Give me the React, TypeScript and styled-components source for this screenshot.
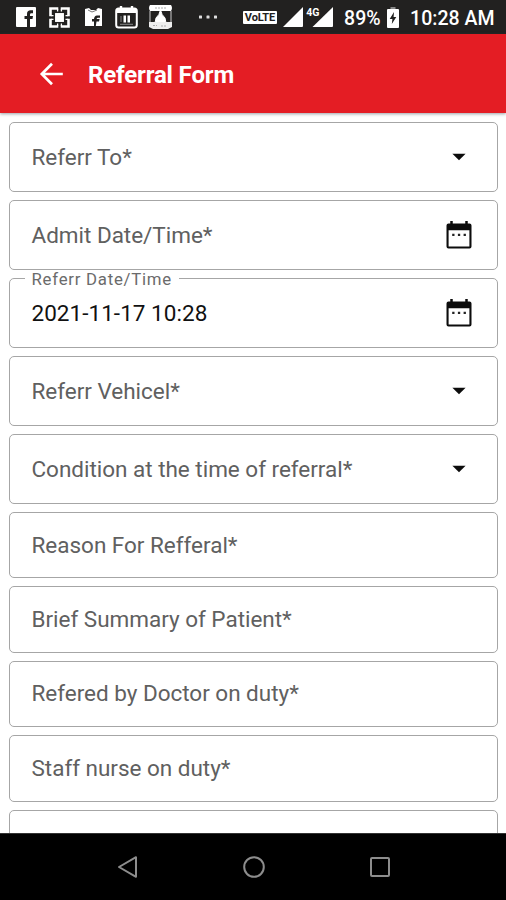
import React from 'react';
import styled, { createGlobalStyle } from 'styled-components';

const GlobalStyle = createGlobalStyle`
  * { box-sizing: border-box; }
  body { margin: 0; background: #fff; font-family: Roboto, sans-serif; }
`;

const Screen = styled.div`
  width: 506px;
  height: 900px;
  display: flex;
  flex-direction: column;
  overflow: hidden;
  background: #fff;
`;

const StatusBar = styled.header`
  flex: none;
  height: 34px;
  display: flex;
  align-items: center;
  background: #222120;
  color: #fff;
`;

const StatusIcon = styled.svg<{ $gap: number }>`
  flex: none;
  display: block;
  margin-left: ${(p) => p.$gap}px;
`;

const StatusText = styled.span<{ $gap: number; $width: number }>`
  flex: none;
  width: ${(p) => p.$width}px;
  margin-left: ${(p) => p.$gap}px;
  padding-top: 3px;
  font-size: 19.5px;
  line-height: 24px;
  font-weight: 500;
  letter-spacing: 0.05px;
  white-space: nowrap;
`;

const VolteBadge = styled.span`
  flex: none;
  width: 34px;
  height: 13px;
  margin: 1px 0 0 25px;
  border-radius: 1px;
  background: #fff;
  color: #222120;
  font-size: 11px;
  line-height: 13px;
  font-weight: 700;
  letter-spacing: -0.1px;
  text-align: center;
`;

const AppBar = styled.div`
  flex: none;
  position: relative;
  height: 79px;
  display: flex;
  align-items: center;
  padding-left: 39px;
  background: #e41d24;
  box-shadow: 0 1px 3px rgba(60, 70, 80, 0.5);
`;

const Title = styled.h1`
  margin: 2px 0 0 24px;
  color: #fff;
  font-size: 24px;
  line-height: 32px;
  font-weight: 700;
  letter-spacing: -0.15px;
`;

const Form = styled.main`
  flex: 1;
  min-height: 0;
  overflow: hidden;
  display: flex;
  flex-direction: column;
  gap: 8px;
  padding: 9px 8px 0 9px;
`;

const FieldBox = styled.div<{ $tall: boolean }>`
  flex: none;
  position: relative;
  height: ${(p) => (p.$tall ? 70 : 66.4)}px;
  display: flex;
  align-items: center;
  justify-content: space-between;
  padding: 0 24px 0 21.5px;
  border: 1px solid #a6a6a6;
  border-radius: 5px;
`;

const FieldText = styled.span<{ $filled?: boolean }>`
  padding-bottom: ${(p) => (p.$filled ? 0 : 1)}px;
  color: ${(p) => (p.$filled ? '#111' : '#606060')};
  font-size: 22.5px;
  line-height: 30px;
  letter-spacing: ${(p) => (p.$filled ? 0.04 : -0.02)}px;
  white-space: nowrap;
`;

const FloatingLabel = styled.span`
  position: absolute;
  left: 14.5px;
  top: -8px;
  padding: 0 7px;
  background: #fff;
  color: #6b6b6b;
  font-size: 16.8px;
  line-height: 16px;
  letter-spacing: 0.75px;
  white-space: nowrap;
`;

const FieldIcon = styled.svg`
  flex: none;
  display: block;
`;

const NavBar = styled.nav`
  flex: none;
  height: 67px;
  display: flex;
  justify-content: center;
  align-items: center;
  gap: 102px;
  padding-left: 2px;
  background: #000;
  border-top: 1px solid #333;
`;

const FacebookIcon = () => (
  <StatusIcon $gap={16} width="20" height="20" viewBox="0 0 20 20">
    <rect width="20" height="20" rx="1" fill="#fff" />
    <path d="M11 20V12H8.5V9H11V7Q11 3.3 14.7 3.3H17V6.2H15.4Q14 6.2 14 7.6V9H17L16.5 12H14V20Z" fill="#222120" />
  </StatusIcon>
);

const TargetIcon = () => (
  <StatusIcon $gap={13} width="21" height="21" viewBox="0 0 21 21" fill="none" stroke="#fff">
    <path d="M9.3 1.5H1.5V9.3M11.7 1.5H19.5V9.3M1.5 11.7V19.5H9.3M19.5 11.7V19.5H11.7" strokeWidth="2.6" />
    <rect x="6.8" y="6.8" width="7.4" height="7.4" fill="#fff" strokeWidth="1.5" />
    <path d="M8.6 2V4.5H8.6M12.4 2V4.5M8.6 16.5V19M12.4 16.5V19M2 8.6H4.5M2 12.4H4.5M16.5 8.6H19M16.5 12.4H19" strokeWidth="1.3" />
  </StatusIcon>
);

const TornFacebookIcon = () => (
  <StatusIcon $gap={14} width="19" height="20" viewBox="0 0 19 20">
    <path d="M1 2L5 1L7 3L12 3L14 1L18 2V19H1Z" fill="#fff" />
    <path d="M4 3L8 5L13 3" stroke="#777" fill="none" />
    <path d="M10 19V14.5H8V12H10Q10.3 8.5 13 8.5H16V10.8H14Q12.8 10.8 12.6 12H15.6L15 14.5H12.5L11.8 19Z" fill="#222120" />
  </StatusIcon>
);

const CalendarStatusIcon = () => (
  <StatusIcon $gap={12} width="23" height="24" viewBox="0 0 23 24">
    <path d="M6 1V5M17 1V5" stroke="#fff" strokeWidth="2.4" />
    <rect x="1.2" y="3.5" width="20.6" height="19" rx="2.5" fill="none" stroke="#fff" strokeWidth="2" />
    <path d="M2 4H21V8H2Z" fill="#fff" />
    <path d="M8.5 10.5H11V17.5H8.5ZM12.5 10.5H15V17.5H12.5Z" fill="#fff" />
    <path d="M5 19.3H18M6 11V17" stroke="#888" />
  </StatusIcon>
);

const MonumentIcon = () => (
  <StatusIcon $gap={10} width="25" height="26" viewBox="0 0 25 26">
    <path d="M2 1H23Q25 4 23 7H2Q0 4 2 1Z" fill="#fff" />
    <path d="M2 7V19M23 7V19" stroke="#ccc" />
    <path d="M12.5 6Q13.5 11 17 14L18 19H7L8 14Q11.5 11 12.5 6Z" fill="#fff" stroke="#fff" />
    <path d="M1 18H24V23L20 25H5L1 23Z" fill="#eee" />
    <path d="M7 4H18M5 21.5H9M13 22H19" stroke="#aaa" strokeDasharray="2 1" />
  </StatusIcon>
);

const MoreDots = () => (
  <StatusIcon $gap={25} width="20" height="6" viewBox="0 0 20 6" fill="#ddd">
    <rect x="1" y="1.5" width="3" height="3" rx=".6" />
    <rect x="8.5" y="1.5" width="3" height="3" rx=".6" />
    <rect x="16" y="1.5" width="3" height="3" rx=".6" />
  </StatusIcon>
);

const SignalIcons = () => (
  <StatusIcon $gap={6} width="50" height="22" viewBox="0 0 50 22">
    <path d="M0 21L20 1V20Q20 21 19 21Z" fill="#fff" />
    <path d="M29.5 21L50 1V20Q50 21 49 21Z" fill="#fff" />
    <text x="23.2" y="10" fill="#fff" stroke="#222120" strokeWidth="2" paintOrder="stroke" fontFamily="Roboto, sans-serif" fontSize="10.5" fontWeight="700">4G</text>
  </StatusIcon>
);

const BatteryIcon = () => (
  <StatusIcon $gap={6} width="12" height="21" viewBox="0 0 12 21">
    <path d="M3.5 0H8.5V3H3.5Z" fill="#888" />
    <rect y="2" width="12" height="19" rx="1" fill="#fff" />
    <path d="M7 5L2.7 12H5.4L4.8 17L9.3 10H6.6Z" fill="#222120" />
  </StatusIcon>
);

const BackArrow = () => (
  <svg width="25" height="24" viewBox="0 0 25 24" fill="none" stroke="#fff" strokeWidth="2.7">
    <path d="M23.8 12H3.2M13 1.8L2.8 12L13 22.2" />
  </svg>
);

const CaretIcon = () => (
  <FieldIcon width="28" height="28" viewBox="0 0 28 28">
    <path d="M7.4 10.7H20.6L14 17.3Z" fill="#0c0c0c" />
  </FieldIcon>
);

const DateIcon = () => (
  <FieldIcon width="28" height="30" viewBox="0 0 28 30">
    <path d="M6.5 1V5M21.5 1V5" stroke="#0c0c0c" strokeWidth="2.5" />
    <path d="M3.5 3.5H24.5Q26.5 3.5 26.5 5.5V26.5Q26.5 28.5 24.5 28.5H3.5Q1.5 28.5 1.5 26.5V5.5Q1.5 3.5 3.5 3.5ZM3.6 10.3V26.5H24.4V10.3Z" fill="#0c0c0c" fillRule="evenodd" />
    <path d="M7.2 13.8H9.5V16.1H7.2ZM12.9 13.8H15.2V16.1H12.9ZM18.6 13.8H20.9V16.1H18.6Z" fill="#222" />
  </FieldIcon>
);

type FieldData = { label: string; value?: string; kind: 'select' | 'date' | 'text' };

const fields: FieldData[] = [
  { label: 'Referr To*', kind: 'select' },
  { label: 'Admit Date/Time*', kind: 'date' },
  { label: 'Referr Date/Time', value: '2021-11-17 10:28', kind: 'date' },
  { label: 'Referr Vehicel*', kind: 'select' },
  { label: 'Condition at the time of referral*', kind: 'select' },
  { label: 'Reason For Refferal*', kind: 'text' },
  { label: 'Brief Summary of Patient*', kind: 'text' },
  { label: 'Refered by Doctor on duty*', kind: 'text' },
  { label: 'Staff nurse on duty*', kind: 'text' },
  { label: '', kind: 'text' },
];

const Field = ({ label, value, kind }: FieldData) => (
  <FieldBox $tall={kind !== 'text'}>
    {value && <FloatingLabel>{label}</FloatingLabel>}
    <FieldText $filled={!!value}>{value ?? label}</FieldText>
    {kind === 'select' && <CaretIcon />}
    {kind === 'date' && <DateIcon />}
  </FieldBox>
);

export default function App() {
  return (
    <>
      <GlobalStyle />
      <Screen>
        <StatusBar>
          <FacebookIcon />
          <TargetIcon />
          <TornFacebookIcon />
          <CalendarStatusIcon />
          <MonumentIcon />
          <MoreDots />
          <VolteBadge>VoLTE</VolteBadge>
          <SignalIcons />
          <StatusText $gap={11} $width={37}>89%</StatusText>
          <BatteryIcon />
          <StatusText $gap={11} $width={86}>10:28 AM</StatusText>
        </StatusBar>
        <AppBar>
          <BackArrow />
          <Title>Referral Form</Title>
        </AppBar>
        <Form>
          {fields.map((f, i) => (
            <Field key={i} {...f} />
          ))}
        </Form>
        <NavBar>
          <svg width="24" height="24" viewBox="0 0 24 24" fill="none" stroke="#8d8d8d" strokeWidth="2">
            <path d="M20 2.2V21.8L3 12Z" strokeLinejoin="round" />
          </svg>
          <svg width="24" height="24" viewBox="0 0 24 24" fill="none" stroke="#8d8d8d" strokeWidth="2">
            <circle cx="12" cy="12" r="9.8" />
          </svg>
          <svg width="24" height="24" viewBox="0 0 24 24" fill="none" stroke="#8d8d8d" strokeWidth="2">
            <rect x="3" y="3" width="18" height="18" rx="1" />
          </svg>
        </NavBar>
      </Screen>
    </>
  );
}
